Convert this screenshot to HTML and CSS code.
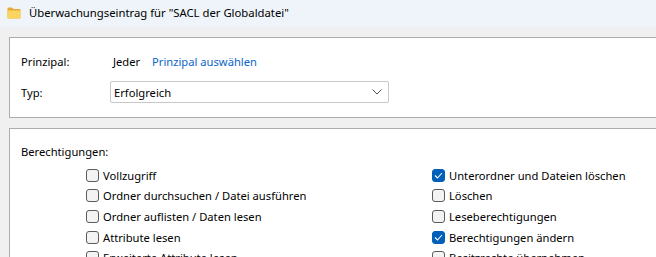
FILE: index.html
```html
<!DOCTYPE html>
<html lang="de">
<head>
<meta charset="utf-8">
<title>Überwachungseintrag</title>
<link rel="stylesheet" href="styles.css">
</head>
<body>
<div class="titlebar">
  <svg class="folder" width="14" height="12" viewBox="0 0 14 12">
    <path d="M0.5 1.5 Q0.5 0.5 1.5 0.5 H5 L6.5 2 H12.5 Q13.5 2 13.5 3 V10.5 Q13.5 11.5 12.5 11.5 H1.5 Q0.5 11.5 0.5 10.5 Z" fill="#e8a93a"/>
    <path d="M0.5 3.5 H13.5 V10.5 Q13.5 11.5 12.5 11.5 H1.5 Q0.5 11.5 0.5 10.5 Z" fill="#fcd462"/>
  </svg>
  <span class="title">Überwachungseintrag für "SACL der Globaldatei"</span>
</div>
<div class="content">
  <section class="panel panel-top">
    <div class="field">
      <span class="label">Prinzipal:</span>
      <span class="value">Jeder</span>
      <a class="link">Prinzipal auswählen</a>
    </div>
    <div class="field field-type">
      <span class="label">Typ:</span>
      <div class="select">
        <span>Erfolgreich</span>
        <svg class="chev" width="10" height="6" viewBox="0 0 10 6"><path d="M0.5 0.5 L5 5 L9.5 0.5" fill="none" stroke="#555" stroke-width="1"/></svg>
      </div>
    </div>
  </section>
  <section class="panel panel-perms">
    <div class="perms-title">Berechtigungen:</div>
    <div class="perms">
      <div class="col">
        <label class="cb"><span class="box"></span>Vollzugriff</label>
        <label class="cb"><span class="box"></span>Ordner durchsuchen / Datei ausführen</label>
        <label class="cb"><span class="box"></span>Ordner auflisten / Daten lesen</label>
        <label class="cb"><span class="box"></span>Attribute lesen</label>
        <label class="cb"><span class="box"></span>Erweiterte Attribute lesen</label>
      </div>
      <div class="col">
        <label class="cb"><span class="box checked"><svg width="9" height="7" viewBox="0 0 9 7"><path d="M1 3.5 L3.5 6 L8 1" fill="none" stroke="#fff" stroke-width="1.1"/></svg></span>Unterordner und Dateien löschen</label>
        <label class="cb"><span class="box"></span>Löschen</label>
        <label class="cb"><span class="box"></span>Leseberechtigungen</label>
        <label class="cb"><span class="box checked"><svg width="9" height="7" viewBox="0 0 9 7"><path d="M1 3.5 L3.5 6 L8 1" fill="none" stroke="#fff" stroke-width="1.1"/></svg></span>Berechtigungen ändern</label>
        <label class="cb"><span class="box"></span>Besitzrechte übernehmen</label>
      </div>
    </div>
  </section>
</div>
</body>
</html>
```
FILE: styles.css
```css
html, body {
  margin: 0;
  padding: 0;
  height: 100%;
  overflow: hidden;
}
body {
  background: #f0f0f0;
  font-family: "Noto Sans", "Open Sans", sans-serif;
  font-size: 11.2px;
  color: #000;
}
.titlebar {
  height: 27px;
  background: #eef4f9;
  display: flex;
  align-items: center;
  padding-left: 7px;
  gap: 8px;
}
.folder { flex: none; margin-top: -2px; }
.title { font-size: 11.3px; line-height: 16px; margin-top: -1px; }
.content {
  padding: 10px 0 0 9px;
  display: flex;
  flex-direction: column;
  gap: 10px;
}
.panel {
  background: #fff;
  border: 1px solid #acacac;
  border-right: none;
  width: 700px;
}
.panel-top {
  height: 79px;
  box-sizing: content-box;
  padding: 0 0 0 11px;
}
.field {
  display: flex;
  align-items: center;
}
.field:first-child { height: 20px; margin-top: 13px; }
.field-type { margin-top: 10px; }
.label { width: 89px; flex: none; }
.value { padding-left: 3px; width: 39px; }
.link { color: #0a66cc; }
.select {
  width: 268px;
  height: 20px;
  border: 1px solid #c8c8c8;
  border-radius: 2px;
  display: flex;
  align-items: center;
  justify-content: space-between;
  padding: 0 6px 0 3px;
  box-sizing: content-box;
}
.chev { flex: none; }
.panel-perms {
  padding: 13px 0 40px 11px;
}
.perms-title { line-height: 20px; }
.perms {
  display: grid;
  grid-template-columns: 346px auto;
  margin-left: 65px;
  margin-top: 3px;
}
.col { display: flex; flex-direction: column; }
.cb {
  display: flex;
  align-items: center;
  gap: 4px;
  height: 20.6px;
}
.box {
  width: 11px;
  height: 11px;
  border: 1px solid #5b5b5b;
  border-radius: 3px;
  background: #f3f3f3;
  flex: none;
  display: flex;
  align-items: center;
  justify-content: center;
}
.box.checked {
  background: #005fb8;
  border-color: #005fb8;
}
```
